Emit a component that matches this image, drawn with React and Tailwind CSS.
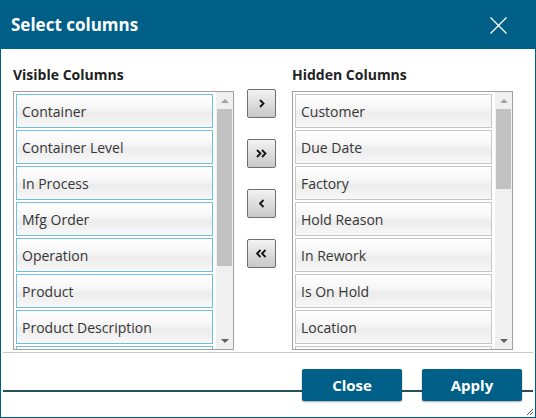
const VISIBLE = [
  "Container",
  "Container Level",
  "In Process",
  "Mfg Order",
  "Operation",
  "Product",
  "Product Description",
  "",
];

const HIDDEN = [
  "Customer",
  "Due Date",
  "Factory",
  "Hold Reason",
  "In Rework",
  "Is On Hold",
  "Location",
  "",
];

const FONT = "font-['Open_Sans','Noto_Sans',sans-serif]";

function ScrollBar({ thumb }) {
  return (
    <div className="flex w-[17px] shrink-0 flex-col bg-[#f0f0f0]">
      <div className="flex h-[17px] items-center justify-center">
        <div className="h-0 w-0 border-x-[4px] border-b-[4px] border-x-transparent border-b-[#a3a3a3]" />
      </div>
      <div className="flex-1 px-[1px]">
        <div className="bg-[#c1c1c1]" style={{ height: thumb }} />
      </div>
      <div className="flex h-[17px] items-center justify-center">
        <div className="h-0 w-0 border-x-[4px] border-t-[4px] border-x-transparent border-t-[#606060]" />
      </div>
    </div>
  );
}

function ColumnList({ title, items, selected, thumb }) {
  return (
    <div className="flex w-[221px] flex-col">
      <div className="pt-[16px] pb-[6px] text-[14px] leading-[20px] font-bold text-[#222]">
        {title}
      </div>
      <div className="flex h-[259px] border border-[#a0a0a0] bg-white">
        <div className="flex flex-1 flex-col gap-[2px] overflow-hidden p-[2px] pr-[3px]">
          {items.map((name, i) => (
            <div
              key={i}
              className={`flex h-[34px] shrink-0 items-center border pl-[5px] text-[14px] text-[#363636] bg-[linear-gradient(to_bottom,#ffffff_0%,#f7f7f7_40%,#ececec_58%,#f8f8f8_100%)] ${
                selected ? "border-[#72bfdc]" : "border-[#c6c6c6]"
              }`}
            >
              {name}
            </div>
          ))}
        </div>
        <ScrollBar thumb={thumb} />
      </div>
    </div>
  );
}

// chevron strokes drawn to match the bold little arrows on the move buttons
function Chevrons({ dir, count }) {
  const pts = dir === "right" ? "0,0 3.5,3.5 0,7" : "3.5,0 0,3.5 3.5,7";
  return (
    <svg width={count === 2 ? 12 : 6} height="9" viewBox={`-1 -1 ${count === 2 ? 12 : 6} 9`}>
      <polyline points={pts} fill="none" stroke="#111" strokeWidth="1.8" />
      {count === 2 && (
        <polyline points={pts} transform="translate(5 0)" fill="none" stroke="#111" strokeWidth="1.8" />
      )}
    </svg>
  );
}

function MoveButton({ dir, count }) {
  return (
    <button className="flex h-[29px] w-[29px] items-center justify-center rounded-[2px] border border-[#6e6e6e] bg-[linear-gradient(to_bottom,#f3f3f3,#c8c8c8)]">
      <Chevrons dir={dir} count={count} />
    </button>
  );
}

function FooterButton({ label }) {
  return (
    <button className="h-[32px] w-[100px] shrink-0 rounded-[2px] bg-[#005f87] text-[15px] font-bold text-white shadow-[0_1px_2px_rgba(0,0,0,0.35)]">
      {label}
    </button>
  );
}

export default function App() {
  return (
    <div className={`${FONT} flex h-[418px] w-[536px] flex-col border border-[#005f87] bg-white`}>
      <div className="flex h-[48px] shrink-0 items-center justify-between bg-[#005f87] pl-[10px] pr-[28px]">
        <span className="text-[17px] font-bold text-white">Select columns</span>
        <svg width="17" height="17" viewBox="0 0 17 17">
          <path d="M0.5 0.5 L16.5 16.5 M16.5 0.5 L0.5 16.5" stroke="#fff" strokeWidth="1.3" />
        </svg>
      </div>

      <div className="flex shrink-0 pl-[12px]">
        <ColumnList title="Visible Columns" items={VISIBLE} selected thumb={157} />
        <div className="ml-[13px] mr-[16px] flex flex-col gap-[21px] pt-[40px]">
          <MoveButton dir="right" count={1} />
          <MoveButton dir="right" count={2} />
          <MoveButton dir="left" count={1} />
          <MoveButton dir="left" count={2} />
        </div>
        <ColumnList title="Hidden Columns" items={HIDDEN} thumb={80} />
      </div>

      <div className="mx-[2px] mt-[2px] h-px bg-[#c8c8c8]" />

      <div className="relative flex flex-1 items-start px-[2px] pt-[16px]">
        <div className="mt-[21px] h-[2px] flex-1 bg-[#264f5c]" />
        <FooterButton label="Close" />
        <div className="mt-[21px] h-[2px] w-[20px] bg-[#264f5c]" />
        <FooterButton label="Apply" />
        <div className="mt-[21px] h-[2px] w-[11px] bg-[#264f5c]" />
        <svg className="absolute right-[1px] bottom-[1px]" width="8" height="8" viewBox="0 0 8 8">
          <path d="M7 1 L1 7 M7 4 L4 7" stroke="#555" strokeWidth="1" />
        </svg>
      </div>
    </div>
  );
}
